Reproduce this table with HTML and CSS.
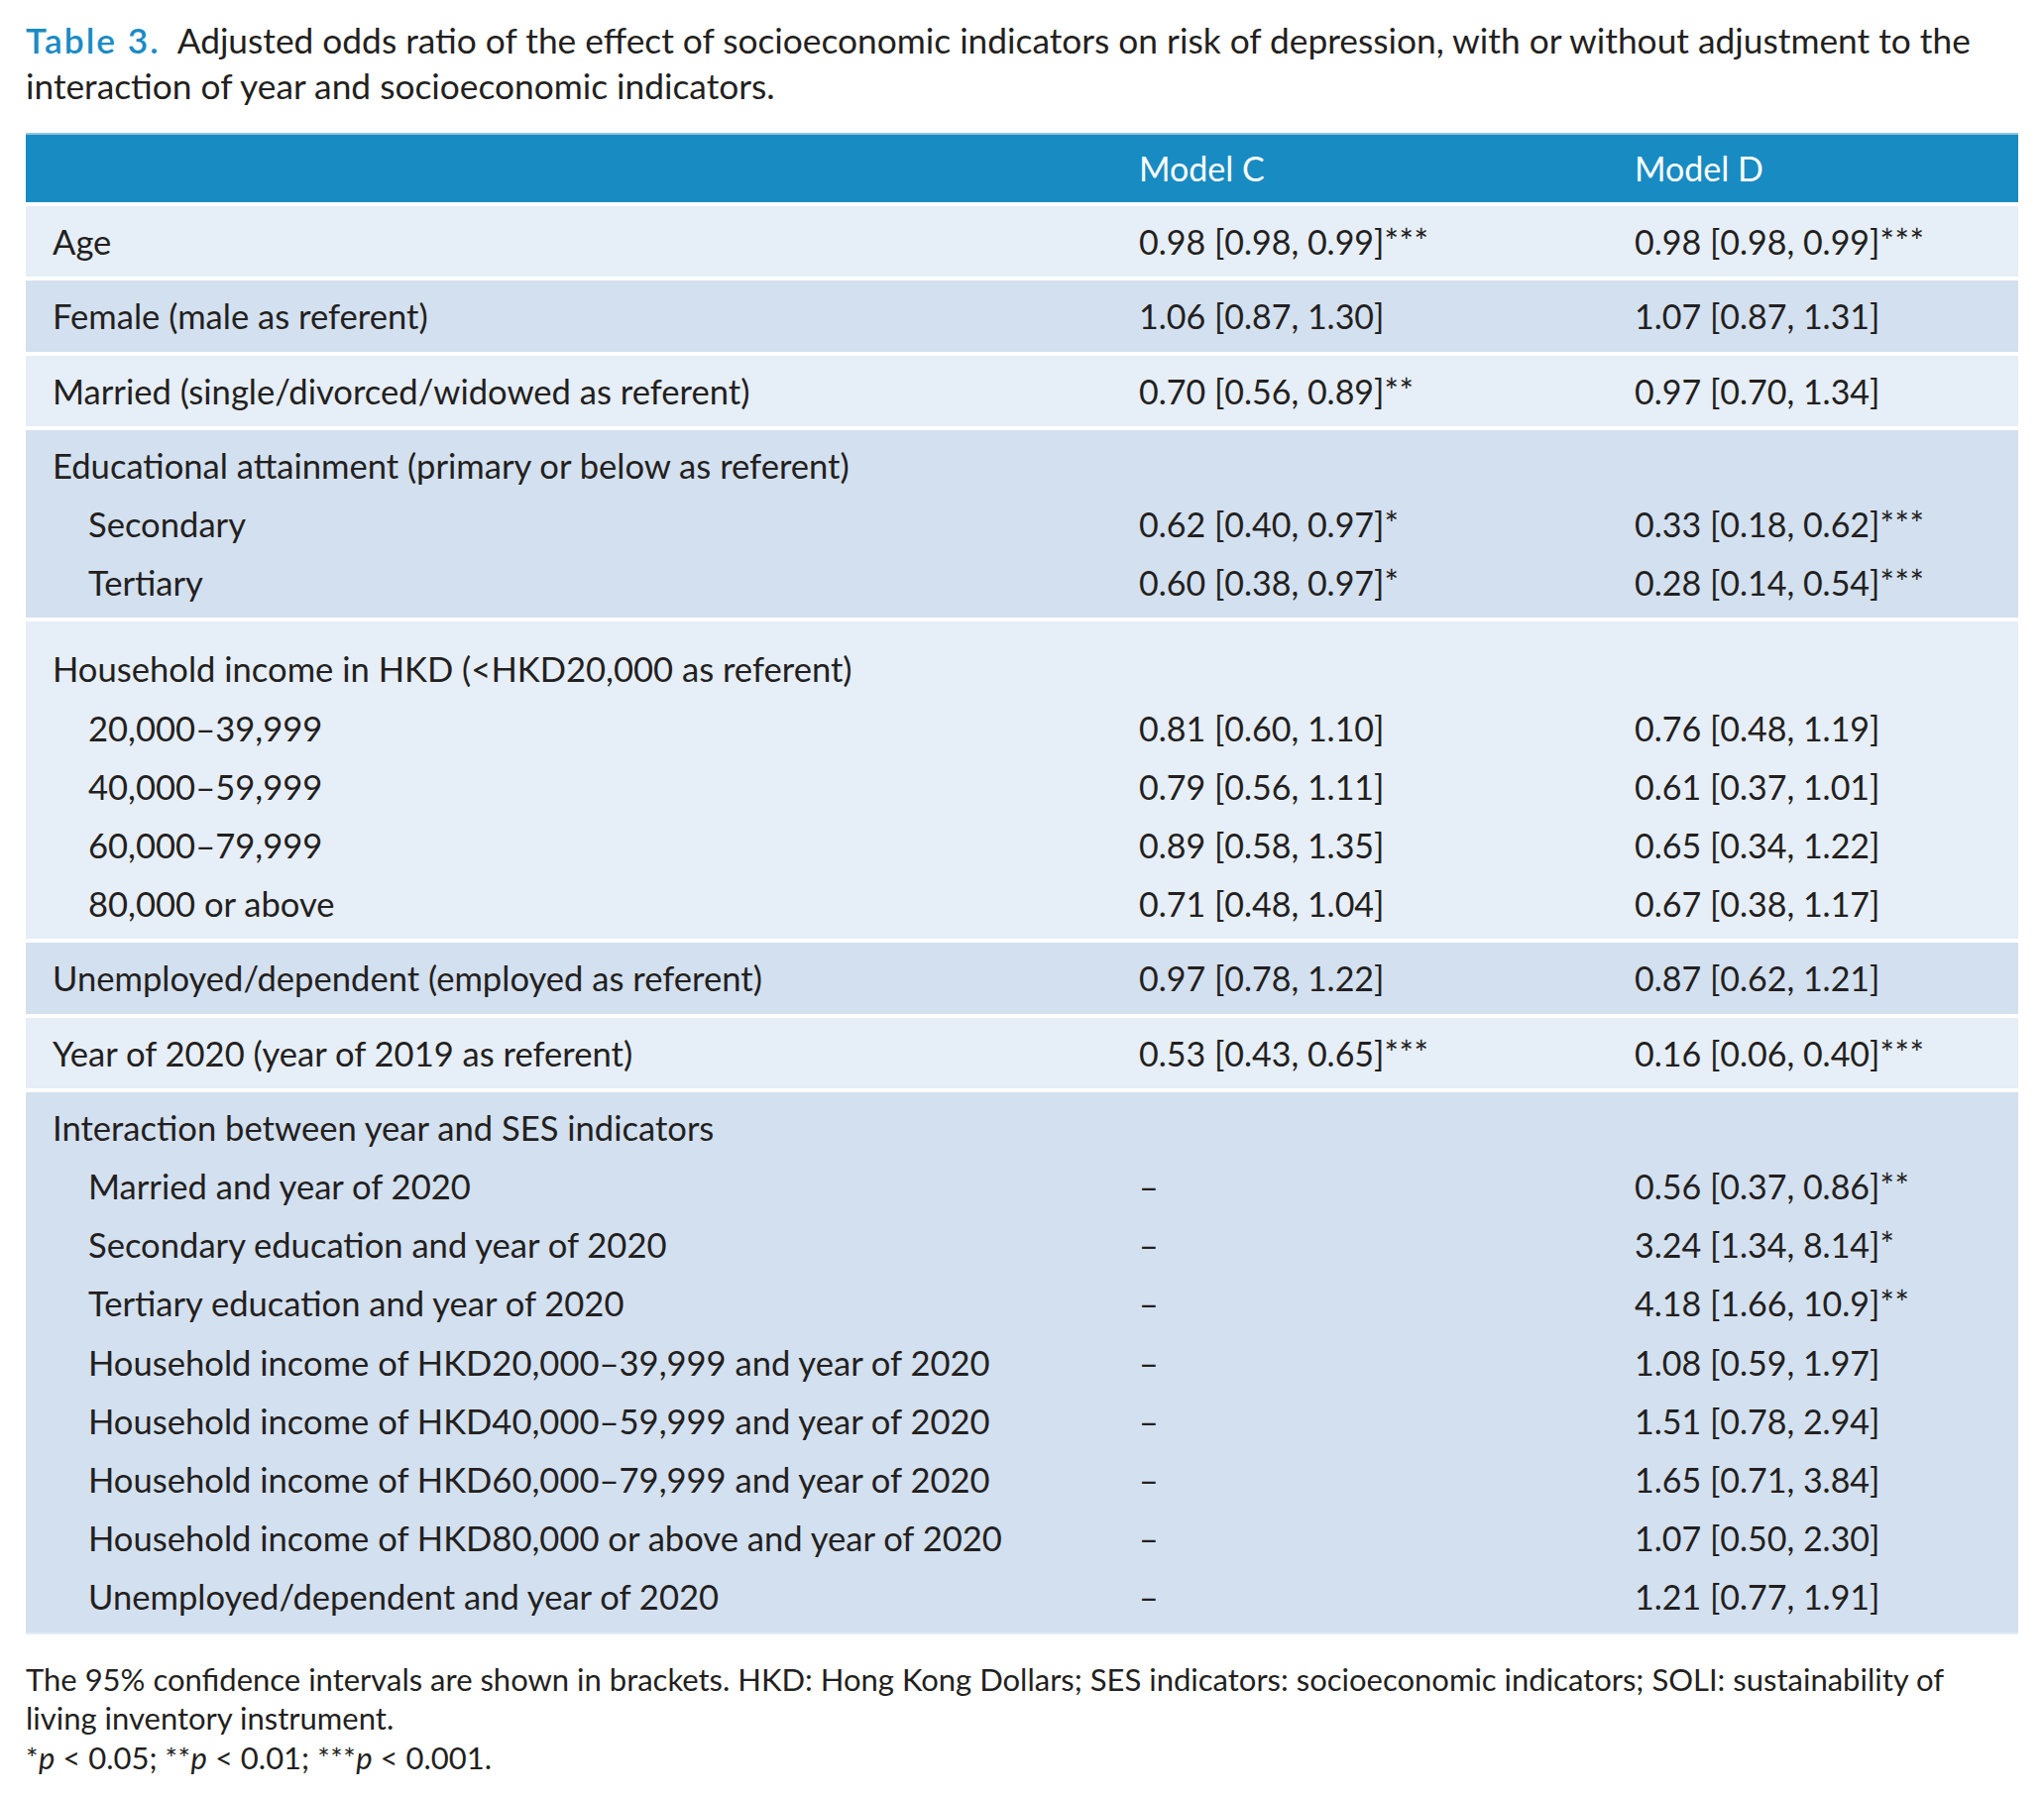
FILE: index.html
```html
<!DOCTYPE html>
<html lang="en">
<head>
<meta charset="utf-8">
<title>Table 3</title>
<link rel="stylesheet" href="styles.css">
</head>
<body>
<div class="page">
  <p class="caption"><span class="label">Table 3.</span>Adjusted odds ratio of the effect of socioeconomic indicators on risk of depression, with or without adjustment to the interaction of year and socioeconomic indicators.</p>

  <div class="table">
    <div class="group head">
      <div class="line"><span class="c1"></span><span class="c2">Model C</span><span class="c3">Model D</span></div>
    </div>

    <div class="group light">
      <div class="line"><span class="c1">Age</span><span class="c2">0.98 [0.98, 0.99]<sup>***</sup></span><span class="c3">0.98 [0.98, 0.99]<sup>***</sup></span></div>
    </div>

    <div class="group dark">
      <div class="line"><span class="c1">Female (male as referent)</span><span class="c2">1.06 [0.87, 1.30]</span><span class="c3">1.07 [0.87, 1.31]</span></div>
    </div>

    <div class="group light">
      <div class="line"><span class="c1">Married (single/divorced/widowed as referent)</span><span class="c2">0.70 [0.56, 0.89]<sup>**</sup></span><span class="c3">0.97 [0.70, 1.34]</span></div>
    </div>

    <div class="group dark">
      <div class="line"><span class="c1">Educational attainment (primary or below as referent)</span><span class="c2"></span><span class="c3"></span></div>
      <div class="line sub"><span class="c1">Secondary</span><span class="c2">0.62 [0.40, 0.97]<sup>*</sup></span><span class="c3">0.33 [0.18, 0.62]<sup>***</sup></span></div>
      <div class="line sub"><span class="c1">Tertiary</span><span class="c2">0.60 [0.38, 0.97]<sup>*</sup></span><span class="c3">0.28 [0.14, 0.54]<sup>***</sup></span></div>
    </div>

    <div class="group light spaced">
      <div class="line"><span class="c1">Household income in HKD (&lt;HKD20,000 as referent)</span><span class="c2"></span><span class="c3"></span></div>
      <div class="line sub"><span class="c1">20,000–39,999</span><span class="c2">0.81 [0.60, 1.10]</span><span class="c3">0.76 [0.48, 1.19]</span></div>
      <div class="line sub"><span class="c1">40,000–59,999</span><span class="c2">0.79 [0.56, 1.11]</span><span class="c3">0.61 [0.37, 1.01]</span></div>
      <div class="line sub"><span class="c1">60,000–79,999</span><span class="c2">0.89 [0.58, 1.35]</span><span class="c3">0.65 [0.34, 1.22]</span></div>
      <div class="line sub"><span class="c1">80,000 or above</span><span class="c2">0.71 [0.48, 1.04]</span><span class="c3">0.67 [0.38, 1.17]</span></div>
    </div>

    <div class="group dark">
      <div class="line"><span class="c1">Unemployed/dependent (employed as referent)</span><span class="c2">0.97 [0.78, 1.22]</span><span class="c3">0.87 [0.62, 1.21]</span></div>
    </div>

    <div class="group light">
      <div class="line"><span class="c1">Year of 2020 (year of 2019 as referent)</span><span class="c2">0.53 [0.43, 0.65]<sup>***</sup></span><span class="c3">0.16 [0.06, 0.40]<sup>***</sup></span></div>
    </div>

    <div class="group dark last">
      <div class="line"><span class="c1">Interaction between year and SES indicators</span><span class="c2"></span><span class="c3"></span></div>
      <div class="line sub"><span class="c1">Married and year of 2020</span><span class="c2">–</span><span class="c3">0.56 [0.37, 0.86]<sup>**</sup></span></div>
      <div class="line sub"><span class="c1">Secondary education and year of 2020</span><span class="c2">–</span><span class="c3">3.24 [1.34, 8.14]<sup>*</sup></span></div>
      <div class="line sub"><span class="c1">Tertiary education and year of 2020</span><span class="c2">–</span><span class="c3">4.18 [1.66, 10.9]<sup>**</sup></span></div>
      <div class="line sub"><span class="c1">Household income of HKD20,000–39,999 and year of 2020</span><span class="c2">–</span><span class="c3">1.08 [0.59, 1.97]</span></div>
      <div class="line sub"><span class="c1">Household income of HKD40,000–59,999 and year of 2020</span><span class="c2">–</span><span class="c3">1.51 [0.78, 2.94]</span></div>
      <div class="line sub"><span class="c1">Household income of HKD60,000–79,999 and year of 2020</span><span class="c2">–</span><span class="c3">1.65 [0.71, 3.84]</span></div>
      <div class="line sub"><span class="c1">Household income of HKD80,000 or above and year of 2020</span><span class="c2">–</span><span class="c3">1.07 [0.50, 2.30]</span></div>
      <div class="line sub"><span class="c1">Unemployed/dependent and year of 2020</span><span class="c2">–</span><span class="c3">1.21 [0.77, 1.91]</span></div>
    </div>
  </div>

  <div class="notes">
    <p>The 95% confidence intervals are shown in brackets. HKD: Hong Kong Dollars; SES indicators: socioeconomic indicators; SOLI: sustainability of living inventory instrument.</p>
    <p><sup>*</sup><i>p</i> &lt; 0.05; <sup>**</sup><i>p</i> &lt; 0.01; <sup>***</sup><i>p</i> &lt; 0.001.</p>
  </div>
</div>
</body>
</html>
```

FILE: styles.css
```css
* { box-sizing: border-box; }

html, body {
  margin: 0;
  padding: 0;
  background: #ffffff;
}

body {
  font-family: "Lato", "Liberation Sans", sans-serif;
  color: #231f20;
}

.page {
  width: 2062px;
  padding: 18px 26px 0 26px;
}

.caption {
  margin: 0;
  font-size: 35.3px;
  line-height: 46px;
  max-width: 2005px;
}

.caption .label {
  color: #1a8bc4;
  font-weight: 600;
  letter-spacing: 2px;
  margin-right: 17px;
}

.table {
  margin-top: 24px;
  display: flex;
  flex-direction: column;
  gap: 4px;
}

.group {
  padding: 6px 0;
}

.group.head {
  background: #188bc2;
  color: #ffffff;
  border-top: 2px solid #8fc3e3;
  padding: 4px 0 5px;
}

.group.light { background: #e6eef7; }
.group.dark { background: #d3e0ef; }
.group.spaced { padding-top: 18px; }
.group.last { border-bottom: 2px solid #e4ecf5; }

.line {
  display: grid;
  grid-template-columns: 1098px 500px 1fr;
  font-size: 34px;
  line-height: 59.2px;
  white-space: nowrap;
}

.c1 {
  padding-left: 27px;
  font-size: 34.6px;
}
.c2, .c3 { padding-left: 25px; }

.line.sub .c1 { padding-left: 63px; }

sup {
  font-size: 1em;
  line-height: 0;
  vertical-align: 0.02em;
  letter-spacing: 0.5px;
}

.notes {
  margin-top: 26px;
  font-size: 31px;
  line-height: 39.5px;
}

.notes p {
  margin: 0;
  max-width: 2010px;
}

.notes sup {
  font-size: 0.95em;
  vertical-align: 0;
}
```
